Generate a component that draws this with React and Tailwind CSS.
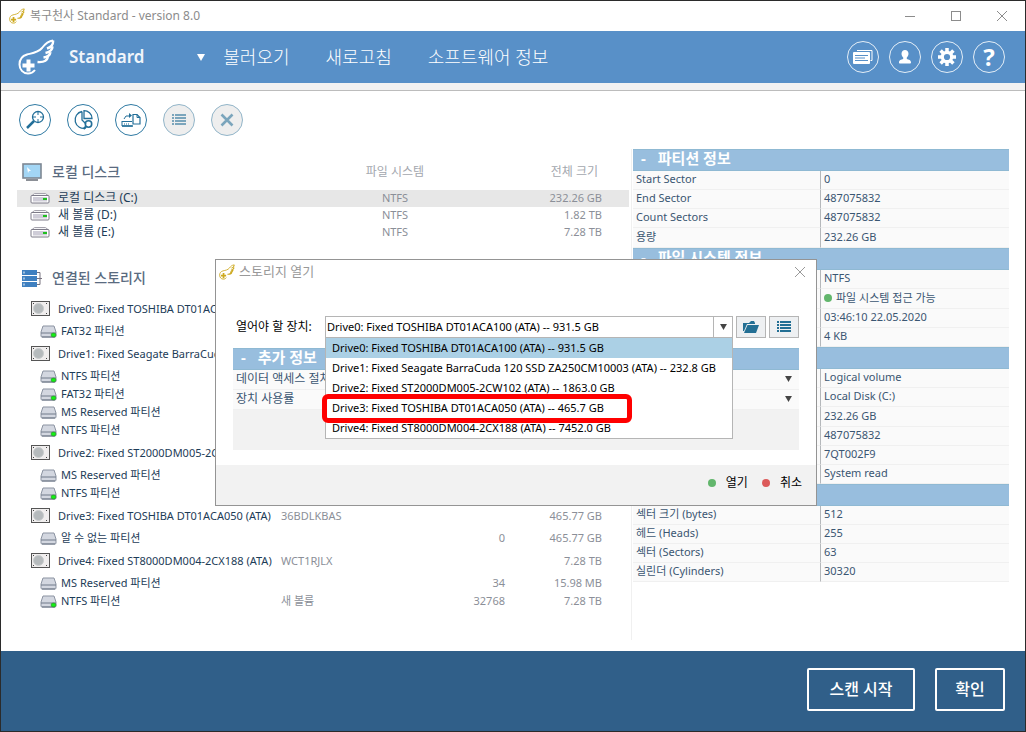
import React, { useState } from "react";

const devices = [
  "Drive0: Fixed TOSHIBA DT01ACA100 (ATA) -- 931.5 GB",
  "Drive1: Fixed Seagate BarraCuda 120 SSD ZA250CM10003 (ATA) -- 232.8 GB",
  "Drive2: Fixed ST2000DM005-2CW102 (ATA) -- 1863.0 GB",
  "Drive3: Fixed TOSHIBA DT01ACA050 (ATA) -- 465.7 GB",
  "Drive4: Fixed ST8000DM004-2CX188 (ATA) -- 7452.0 GB",
];

const localDisks = [
  { name: "로컬 디스크 (C:)", fs: "NTFS", size: "232.26 GB", active: true },
  { name: "새 볼륨 (D:)", fs: "NTFS", size: "1.82 TB" },
  { name: "새 볼륨 (E:)", fs: "NTFS", size: "7.28 TB" },
];

const storages = [
  { type: "drive", name: "Drive0: Fixed TOSHIBA DT01ACA100 (ATA)" },
  { type: "part", name: "FAT32 파티션", ok: true },
  { type: "drive", name: "Drive1: Fixed Seagate BarraCuda" },
  { type: "part", name: "NTFS 파티션", ok: true },
  { type: "part", name: "FAT32 파티션", ok: true },
  { type: "part", name: "MS Reserved 파티션" },
  { type: "part", name: "NTFS 파티션", ok: true },
  { type: "drive", name: "Drive2: Fixed ST2000DM005-2CW102" },
  { type: "part", name: "MS Reserved 파티션" },
  { type: "part", name: "NTFS 파티션", ok: true },
  { type: "drive", name: "Drive3: Fixed TOSHIBA DT01ACA050 (ATA)", label: "36BDLKBAS", size: "465.77 GB" },
  { type: "part", name: "알 수 없는 파티션", start: "0", size: "465.77 GB" },
  { type: "drive", name: "Drive4: Fixed ST8000DM004-2CX188 (ATA)", label: "WCT1RJLX", size: "7.28 TB" },
  { type: "part", name: "MS Reserved 파티션", start: "34", size: "15.98 MB" },
  { type: "part", name: "NTFS 파티션", ok: true, label: "새 볼륨", start: "32768", size: "7.28 TB" },
];

const infoSections = [
  {
    title: "파티션 정보",
    rows: [
      { label: "Start Sector", value: "0" },
      { label: "End Sector", value: "487075832" },
      { label: "Count Sectors", value: "487075832" },
      { label: "용량", value: "232.26 GB", tall: true },
    ],
  },
  {
    title: "파일 시스템 정보",
    rows: [
      { value: "NTFS" },
      { value: "파일 시스템 접근 가능", dot: true, tall: true },
      { value: "03:46:10 22.05.2020" },
      { value: "4 KB" },
    ],
  },
  {
    rows: [
      { value: "Logical volume" },
      { value: "Local Disk (C:)" },
      { value: "232.26 GB", tall: true },
      { value: "487075832" },
      { value: "7QT002F9" },
      { value: "System read" },
    ],
  },
  {
    rows: [
      { label: "섹터 크기 (bytes)", value: "512" },
      { label: "헤드 (Heads)", value: "255" },
      { label: "섹터 (Sectors)", value: "63" },
      { label: "실린더 (Cylinders)", value: "30320" },
    ],
  },
];

function WingLogo({ className }) {
  return (
    <svg viewBox="0 0 37 36" className={className} fill="none" stroke="currentColor" aria-hidden="true">
      <path
        d="M17 31c-2 2.500-4 3.500-7 3.500-5 0-8.500-4-8.500-9C1.500 20 4 17 9 15.500c6-1.500 11-2 15-6.500C27 5 30 2 35 1.500"
        strokeWidth="2"
      />
      <path
        d="M35 1.500c.5 4-1.500 6.500-6 8M34.500 7.500c0 3.500-2.500 5.500-7 6.500M32.500 13c-.5 3.500-3 5-7 5.500M30 18c-1 4-4.500 5.500-10.500 5"
        strokeWidth="2.400"
      />
      <path d="M8.500 20.500h4v4h4v4h-4v4h-4v-4h-4v-4h4z" fill="currentColor" stroke="none" />
    </svg>
  );
}

function ListIcon({ className }) {
  return (
    <svg viewBox="0 0 16 14" className={className} fill="currentColor" aria-hidden="true">
      <path d="M1 1h2v2H1zM4 1h11v2H4zM1 4h2v2H1zM4 4h11v2H4zM1 7h2v2H1zM4 7h11v2H4zM1 10h2v2H1zM4 10h11v2H4z" />
    </svg>
  );
}

function CloseIcon({ className }) {
  return (
    <svg viewBox="0 0 12 12" className={className} fill="none" stroke="currentColor" aria-hidden="true">
      <path d="M1 1l10 10M11 1L1 11" />
    </svg>
  );
}

function ArrowIcon({ className }) {
  return (
    <svg viewBox="0 0 8 7" className={className} fill="currentColor" aria-hidden="true">
      <path d="M0 0h8L4 7z" />
    </svg>
  );
}

function VolumeIcon() {
  return (
    <svg viewBox="0 0 20 12" className="h-3 w-5 shrink-0" aria-hidden="true">
      <path d="M1.500 4L4.500 1.500h11L18.500 4z" fill="#f5f5f7" stroke="#a5a3ad" />
      <rect x="1" y="3.500" width="18" height="7.500" rx="1" fill="#fff" stroke="#7d7b88" />
      <rect x="3" y="5" width="14" height="4.500" fill="#cfcdd8" />
      <rect x="13" y="6" width="4" height="2" fill="#1fbf1f" />
    </svg>
  );
}

function DriveIcon() {
  return (
    <svg viewBox="0 0 20 15" className="h-[15px] w-5 shrink-0" aria-hidden="true">
      <rect x="1.500" y=".5" width="18" height="14" fill="#f0eeee" stroke="#555" />
      <circle cx="8.500" cy="7.500" r="5" fill="#b5babc" stroke="#c9cccd" />
      <path d="M3 2h1v1H3zM16 2h1v1h-1zM3 12h1v1H3zM16 12h1v1h-1z" fill="#444" />
    </svg>
  );
}

function PartitionIcon({ ok }) {
  return (
    <svg viewBox="0 0 17 13" className="h-[13px] w-[17px] shrink-0" aria-hidden="true">
      <path d="M3 1h11l2 6v4q0 1-1 1H2q-1 0-1-1V7z" fill="#d3d7e0" stroke="#8b93a1" />
      <path d="M1 8h15" stroke="#717a8a" />
      <path d="M2 12h13" stroke="#6c7686" />
      {ok && <ellipse cx="13.500" cy="10" rx="2.500" ry="2" fill="#14f014" stroke="#1a7a1a" strokeWidth="0.500" />}
    </svg>
  );
}

function MonitorIcon() {
  return (
    <svg viewBox="0 0 20 18" className="h-[18px] w-5" aria-hidden="true">
      <rect x="1" y="1" width="18" height="14" fill="#a3d6f5" stroke="#7d8793" strokeWidth="1.600" />
      <path d="M5 4l4 4-2 0-1 2z" fill="#fff" />
      <path d="M4 17h12" stroke="#8b8f96" strokeWidth="2" />
    </svg>
  );
}

function ServerIcon() {
  return (
    <svg viewBox="0 0 20 17" className="h-[17px] w-5" aria-hidden="true">
      <path d="M0 0h15v5H0zM0 6h15v5H0zM0 12h15v5H0z" fill="#3f80c0" />
      <path d="M1.500 1.500h1v2h-1zM1.500 7.500h1v2h-1zM1.500 13.500h1v2h-1z" fill="#fff" />
      <path d="M15 2.500h3v12h-3M15 8.500h5" fill="none" stroke="#77727f" />
    </svg>
  );
}

function ToolButton({ label, disabled, children }) {
  return (
    <button
      type="button"
      aria-label={label}
      disabled={disabled}
      className={
        disabled
          ? "flex size-8 items-center justify-center rounded-full border border-[#92b5c9] bg-[#eeeeee] text-[#7ba5bc]"
          : "flex size-8 items-center justify-center rounded-full border border-[#2f7aa3] bg-white text-[#236f99]"
      }
    >
      {children}
    </button>
  );
}

function HeaderButton({ label, children }) {
  return (
    <button
      type="button"
      aria-label={label}
      className="flex size-8 items-center justify-center rounded-full border border-[#e4eef7] text-white"
    >
      {children}
    </button>
  );
}

function TitleBar() {
  return (
    <div className="flex h-[30px] items-center bg-white pl-2 text-[#8c8c8c]">
      <WingLogo className="size-4 text-[#cda91f]" />
      <span className="ml-[5px] text-xs">복구천사 Standard - version 8.0</span>
      <div className="ml-auto flex items-center">
        <button type="button" aria-label="최소화" className="flex w-[46px] justify-center">
          <span className="h-px w-[10px] bg-[#8c8c8c]" />
        </button>
        <button type="button" aria-label="최대화" className="flex w-[46px] justify-center">
          <span className="size-[10px] border border-[#8c8c8c]" />
        </button>
        <button type="button" aria-label="닫기" className="flex w-[46px] justify-center">
          <CloseIcon className="size-3" />
        </button>
      </div>
    </div>
  );
}

function Header() {
  return (
    <header className="flex h-[52px] items-center bg-[#5890c8] pr-5 pl-[17px] text-white">
      <WingLogo className="h-9 w-[37px]" />
      <h1 className="ml-[14px] text-[17px] font-semibold text-[#f1f5fa]">Standard</h1>
      <nav className="ml-[53px] flex items-center text-lg font-light">
        <ArrowIcon className="mr-[18px] h-[7px] w-2" />
        <a href="#load" className="mr-9">불러오기</a>
        <a href="#refresh" className="mr-9">새로고침</a>
        <a href="#about">소프트웨어 정보</a>
      </nav>
      <div className="ml-auto flex gap-[10px]">
        <HeaderButton label="뉴스">
          <svg viewBox="0 0 20 14" className="h-[14px] w-5" aria-hidden="true">
            <path d="M4 .5h15v10h-1.500" fill="none" stroke="#fff" />
            <rect x="0" y="2" width="17" height="12" rx="1" fill="#fff" />
            <path d="M2 5.500h13M2 8h10M2 10.500h13" stroke="#5890c8" />
          </svg>
        </HeaderButton>
        <HeaderButton label="사용자">
          <svg viewBox="0 0 14 16" className="h-4 w-[14px]" fill="currentColor" aria-hidden="true">
            <path d="M7 1c2 0 3.500 1.500 3.500 3.800 0 1.500-.7 2.700-1.700 3.700v1.500c2 .5 4.200 1 4.200 3.500 0 .8-.5 1-1 1H2c-.6 0-1-.2-1-1C1 11 3.200 10.500 5.200 10V8.500c-1-1-1.700-2.200-1.700-3.700C3.500 2.500 5 1 7 1z" />
          </svg>
        </HeaderButton>
        <HeaderButton label="설정">
          <svg viewBox="0 0 18 18" className="size-[18px]" aria-hidden="true">
            <path d="M9 0v18M0 9h18M2.600 2.600l12.800 12.800M15.400 2.600L2.600 15.400" stroke="#fff" strokeWidth="3.500" />
            <circle cx="9" cy="9" r="4.700" fill="#5890c8" stroke="#fff" strokeWidth="3.200" />
          </svg>
        </HeaderButton>
        <HeaderButton label="도움말">
          <span className="text-2xl leading-6 font-bold">?</span>
        </HeaderButton>
      </div>
    </header>
  );
}

function Toolbar() {
  return (
    <div className="flex gap-4 px-[18px] py-[13px]">
      <ToolButton label="스캔">
        <svg viewBox="0 0 20 20" className="size-5" fill="none" stroke="currentColor" aria-hidden="true">
          <circle cx="13" cy="7" r="5.500" strokeWidth="1.300" />
          <path d="M13 1v4M13 9v4M7 7h4M15 7h4" />
          <path d="M9 11l-7 7" strokeWidth="2.500" />
        </svg>
      </ToolButton>
      <ToolButton label="파티션 찾기">
        <svg viewBox="0 0 20 20" className="size-5" fill="none" stroke="currentColor" strokeWidth="1.300" aria-hidden="true">
          <path d="M9 1.500a8.500 8.500 0 1 0 4 16.500M9 1.500V10l4 4" />
          <path d="M11 0.700c4 0 8 3 8 7.800h-8z" />
          <circle cx="15.500" cy="14" r="3.200" strokeWidth="1.600" />
          <path d="M13 16.500L10.500 19" strokeWidth="2.200" />
        </svg>
      </ToolButton>
      <ToolButton label="이미지 열기">
        <svg viewBox="0 0 20 16" className="h-4 w-5" fill="none" stroke="currentColor" aria-hidden="true">
          <path d="M12 2.500h4l3 3V12h-7z" strokeWidth="1.200" />
          <path d="M16 2.500v3h3M1 9.500h10M1 9v5h10" />
          <path d="M1 14h11" strokeWidth="1.500" />
          <path d="M3 12h6" strokeDasharray="1 1" />
          <path d="M3 7l2-3h4" />
          <path d="M8 1l3 2.500L8 6z" fill="currentColor" stroke="none" />
        </svg>
      </ToolButton>
      <ToolButton label="목록" disabled>
        <ListIcon className="h-[14px] w-4" />
      </ToolButton>
      <ToolButton label="닫기" disabled>
        <svg viewBox="0 0 14 14" className="size-[14px]" fill="none" stroke="currentColor" strokeWidth="2.600" aria-hidden="true">
          <path d="M1.500 1.500l11 11M12.500 1.500l-11 11" />
        </svg>
      </ToolButton>
    </div>
  );
}

function LocalDisks() {
  return (
    <table className="w-full table-fixed text-[11px] text-[#8b8f98]">
      <colgroup>
        <col />
        <col className="w-[100px]" />
        <col className="w-[184px]" />
      </colgroup>
      <thead>
        <tr className="h-[41px] text-[#a3a7ae]">
          <th className="pt-1 text-left">
            <span className="flex items-center gap-[10px] pl-[5px] text-sm font-medium text-[#5a6b80]">
              <MonitorIcon />
              로컬 디스크
            </span>
          </th>
          <th className="pt-1 text-xs font-normal">파일 시스템</th>
          <th className="pt-1 pr-[31px] text-right text-xs font-normal">전체 크기</th>
        </tr>
      </thead>
      <tbody>
        {localDisks.map((disk) => (
          <tr key={disk.name} className={disk.active ? "h-[17px] bg-[#e7e7e7]" : "h-[17px]"}>
            <td className="pb-0.5">
              <span className="flex items-center gap-2 pl-[13px] text-xs leading-[15px] text-[#1d3c57]">
                <VolumeIcon />
                {disk.name}
              </span>
            </td>
            <td className="pb-0.5 text-center leading-[15px]">{disk.fs}</td>
            <td className="pr-[27px] pb-0.5 text-right leading-[15px]">{disk.size}</td>
          </tr>
        ))}
      </tbody>
    </table>
  );
}

function StorageTable() {
  return (
    <table className="mt-5 w-full table-fixed text-[11px] text-[#8b8f98]">
      <colgroup>
        <col className="w-[264px]" />
        <col />
        <col className="w-[100px]" />
        <col className="w-[124px]" />
      </colgroup>
      <thead>
        <tr className="h-[34px]">
          <th colSpan="4">
            <span className="flex items-center gap-[10px] pl-[5px] text-sm font-medium text-[#5a6b80]">
              <ServerIcon />
              연결된 스토리지
            </span>
          </th>
        </tr>
      </thead>
      <tbody>
        {storages.map((item, i) => (
          <tr key={i} className={item.type === "drive" ? "h-[27px]" : "h-[18px]"}>
            <td>
              {item.type === "drive" ? (
                <span className="flex items-center gap-2 pl-[13px] leading-4 whitespace-nowrap text-[#1d3c57]">
                  <DriveIcon />
                  {item.name}
                </span>
              ) : (
                <span className="flex items-center gap-1 pl-[23px] leading-4 whitespace-nowrap text-[#1d3c57]">
                  <PartitionIcon ok={item.ok} />
                  {item.name}
                </span>
              )}
            </td>
            <td className="leading-4">{item.label}</td>
            <td className="text-right leading-4">{item.start}</td>
            <td className="pr-[27px] text-right leading-4">{item.size}</td>
          </tr>
        ))}
      </tbody>
    </table>
  );
}

function SectionTitle({ children }) {
  return (
    <div className="flex h-[22px] items-center gap-3 border-y border-[#8fb9d3] bg-[#98bede] px-2 pb-1 text-[15px] leading-4 font-bold text-white">
      {children && <span>-</span>}
      {children && <h2>{children}</h2>}
    </div>
  );
}

function InfoSection({ section }) {
  return (
    <section>
      <SectionTitle>{section.title}</SectionTitle>
      <table className="w-full table-fixed border-separate border-spacing-0 text-[11px] text-[#3a5672]">
        <tbody>
          {section.rows.map((row, i) => (
            <tr key={i} className={row.tall ? "h-5" : "h-[19px]"}>
              <th className="w-1/2 border-r border-b border-r-[#b5b8bb] border-b-[#f0f0f0] bg-[#fafafa] px-[3px] pb-0.5 text-left leading-4 font-normal">
                {row.label}
              </th>
              <td className="border-b border-[#f0f0f0] bg-[#fafafa] px-[3px] pb-0.5 leading-4">
                {row.dot && <span className="mr-1 inline-block size-2 rounded-full bg-[#62b66c]" />}
                {row.value}
              </td>
            </tr>
          ))}
        </tbody>
      </table>
    </section>
  );
}

function OpenStorageDialog() {
  const [device, setDevice] = useState(devices[0]);

  return (
    <div
      role="dialog"
      aria-labelledby="dialog-title"
      className="absolute top-[258px] left-[214px] w-[602px] border border-[#949494] bg-white"
    >
      <div className="flex h-6 items-center pr-[10px] pl-[3px] text-[#999]">
        <WingLogo className="size-4 text-[#cda91f]" />
        <h2 id="dialog-title" className="ml-1 text-[13px]">스토리지 열기</h2>
        <button type="button" aria-label="닫기" className="ml-auto">
          <CloseIcon className="size-3" />
        </button>
      </div>

      <div className="px-[17px] pt-8 pb-[15px]">
        <div className="flex items-center gap-[3px] text-[11px]">
          <label htmlFor="device" className="w-[89px] pl-[3px] text-xs whitespace-nowrap">열어야 할 장치:</label>
          <div className="relative flex-1">
            <select
              id="device"
              value={device}
              onChange={(e) => setDevice(e.target.value)}
              className="block h-[22px] w-full appearance-none border border-[#b5b5b5] bg-white px-px leading-4"
            >
              {devices.map((d) => (
                <option key={d}>{d}</option>
              ))}
            </select>
            <span className="pointer-events-none absolute top-0 right-0 flex h-[22px] w-5 items-center justify-center border-l border-[#b5b5b5] text-[#444]">
              <ArrowIcon className="h-[6px] w-[7px]" />
            </span>
            <ul
              role="listbox"
              aria-label="장치"
              className="absolute top-[21px] left-0 z-10 w-full border border-[#b5b5b5] bg-white"
            >
              {devices.map((d) => (
                <li
                  key={d}
                  role="option"
                  aria-selected={d === device}
                  onClick={() => setDevice(d)}
                  className={d === device ? "h-5 bg-[#abd0e5] px-[6px] leading-5" : "h-5 px-[6px] leading-5"}
                >
                  {d}
                </li>
              ))}
            </ul>
            <div className="absolute top-[78px] -left-[3px] z-20 h-[29px] w-[310px] rounded-md border-[5px] border-[#ff0000]" />
          </div>
          <button
            type="button"
            aria-label="폴더"
            className="flex h-[22px] w-[30px] items-center justify-center border border-[#b5b5b5] bg-[#eef0f2] text-[#236f94]"
          >
            <svg viewBox="0 0 16 12" className="h-3 w-4" fill="currentColor" aria-hidden="true">
              <path d="M0 2h6l2-2h3l1 2v1H4L1 10H0z" />
              <path d="M4.500 4H16l-3 8H1z" />
            </svg>
          </button>
          <button
            type="button"
            aria-label="목록"
            className="flex h-[22px] w-[30px] items-center justify-center border border-[#b5b5b5] bg-[#eef0f2] text-[#236f94]"
          >
            <ListIcon className="h-[14px] w-4" />
          </button>
        </div>

        <section className="mt-[10px] bg-[#f2f2f2] pb-[40px]">
          <SectionTitle>추가 정보</SectionTitle>
          {["데이터 액세스 절차", "장치 사용률"].map((name) => (
            <button
              key={name}
              type="button"
              className="flex h-5 w-full items-center justify-between border-b border-[#f0f0f0] bg-[#fafafa] pr-[7px] pb-0.5 pl-[3px] text-xs leading-4 text-[#3a5672]"
            >
              {name}
              <ArrowIcon className="h-[6px] w-[7px] text-[#444]" />
            </button>
          ))}
        </section>
      </div>

      <div className="flex h-10 items-center justify-end gap-[14px] bg-[#f2f2f2] pr-[14px] pb-1 text-xs">
        <button type="button" className="flex items-center gap-[10px]">
          <span className="size-2 rounded-full bg-[#62b66c]" />
          열기
        </button>
        <button type="button" className="flex items-center gap-[10px]">
          <span className="size-2 rounded-full bg-[#dc5a5a]" />
          취소
        </button>
      </div>
    </div>
  );
}

function App() {
  return (
    <div className="relative flex min-h-screen flex-col border border-[#2b2b2b] bg-white font-['Noto_Sans','Noto_Sans_CJK_KR',sans-serif]">
      <TitleBar />
      <Header />
      <div className="h-2 border-b border-[#bcbcbc] bg-[#f2f2f2]" />
      <Toolbar />

      <main className="flex flex-1 gap-[2px] pr-4 pb-[11px] pl-4">
        <div className="flex-1">
          <LocalDisks />
          <StorageTable />
        </div>
        <aside className="w-[378px] border-l border-[#f0f0f0] pl-px">
          {infoSections.map((section, i) => (
            <InfoSection key={i} section={section} />
          ))}
        </aside>
      </main>

      <footer className="flex h-20 items-center justify-end gap-5 bg-[#305f89] px-5 pb-1 text-base font-medium text-white">
        <button type="button" className="h-[43px] w-[108px] rounded-[2px] border-2 border-white">스캔 시작</button>
        <button type="button" className="h-[43px] w-[70px] rounded-[2px] border-2 border-white">확인</button>
      </footer>

      <OpenStorageDialog />
    </div>
  );
}

export default App;
